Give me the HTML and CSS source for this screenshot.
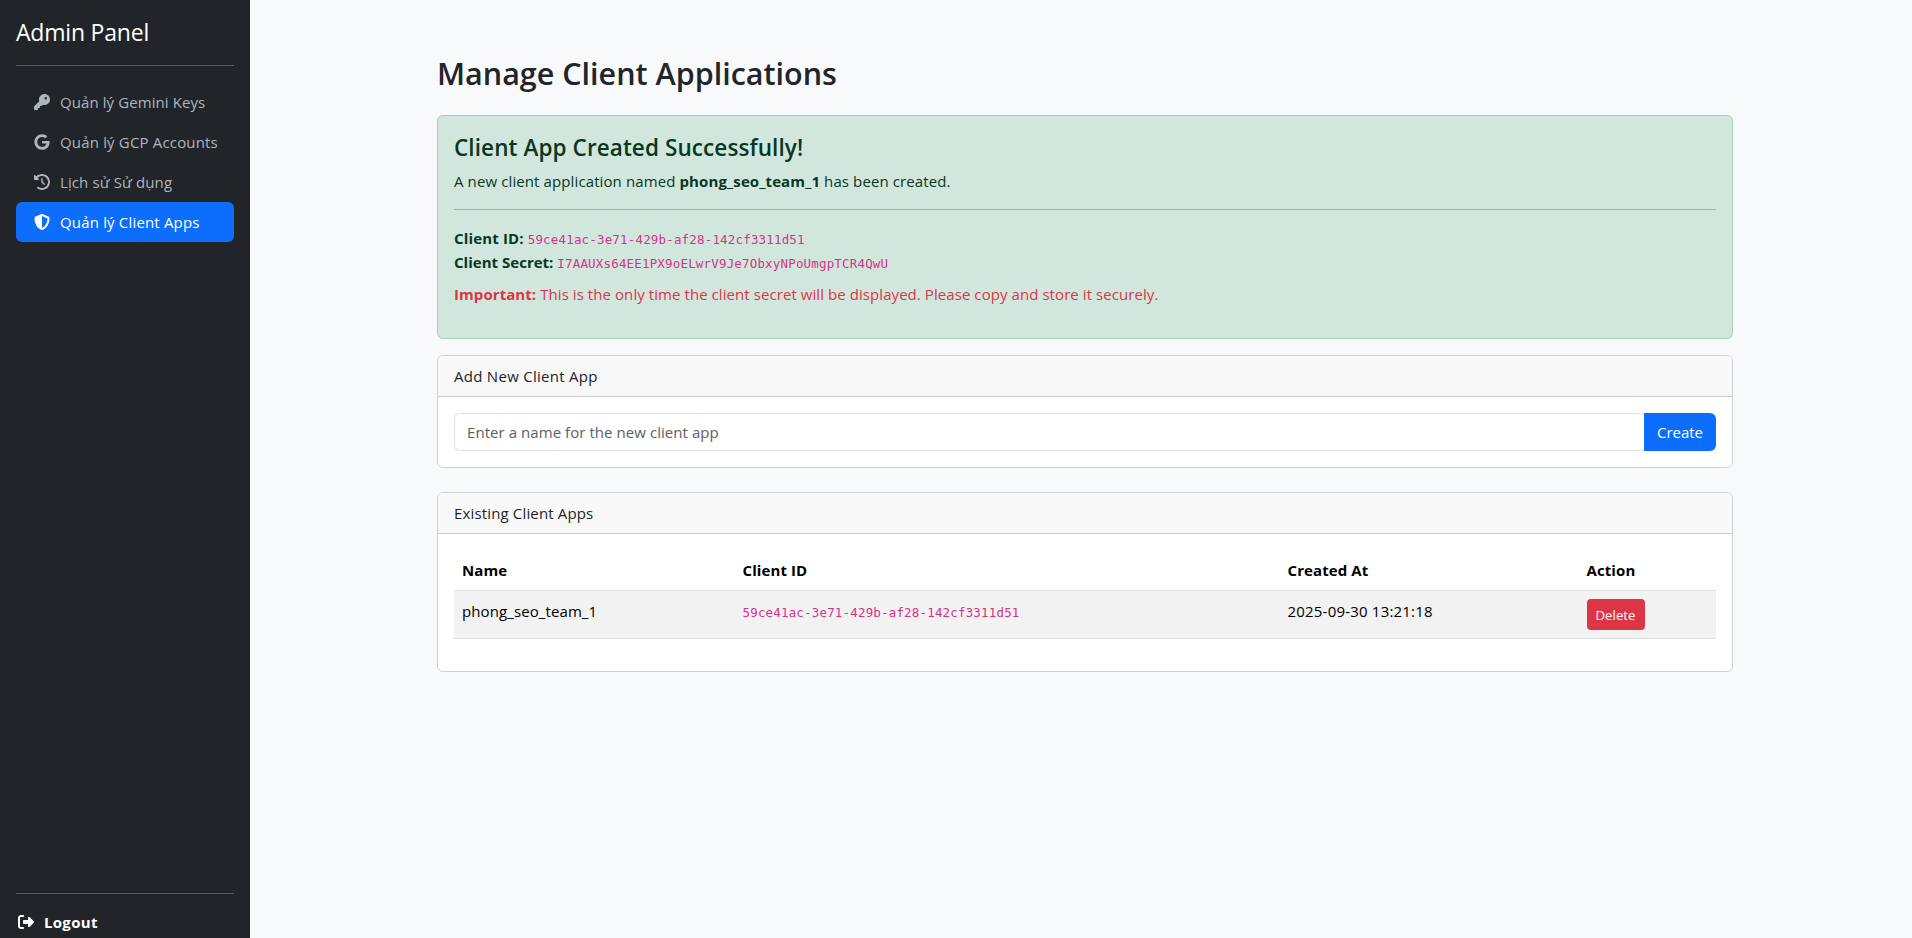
FILE: index.html
```
<!DOCTYPE html>
<html lang="vi">
<head>
<meta charset="utf-8">
<title>Manage Client Applications</title>
<link rel="stylesheet" href="styles.css">
</head>
<body>
<div class="layout">
  <aside class="sidebar">
    <div class="brand">Admin Panel</div>
    <hr class="side-rule">
    <nav class="nav">
      <a class="nav-link"><svg class="icon" viewBox="0 0 512 512"><path d="M336 352c97.200 0 176-78.800 176-176S433.200 0 336 0S160 78.800 160 176c0 18.700 2.900 36.800 8.300 53.700L7 391c-4.500 4.500-7 10.600-7 17v80c0 13.300 10.700 24 24 24h80c13.300 0 24-10.700 24-24V448h40c13.300 0 24-10.700 24-24V384h40c6.400 0 12.500-2.500 17-7l33.300-33.300c16.900 5.400 35 8.300 53.700 8.300zM376 96a40 40 0 1 1 0 80 40 40 0 1 1 0-80z"/></svg><span class="label-gemini">Quản lý Gemini Keys</span></a>
      <a class="nav-link"><svg class="icon" viewBox="-12 0 512 512"><path d="M488 261.800C488 403.300 391.100 504 248 504 110.800 504 0 393.200 0 256S110.800 8 248 8c66.800 0 123 24.500 166.300 64.900l-67.500 64.900C258.500 52.600 94.300 116.600 94.300 256c0 86.500 69.100 156.600 153.700 156.600 98.200 0 135-70.400 140.800-106.900H248v-85.300h236.100c2.300 12.700 3.900 24.900 3.900 41.400z"/></svg><span class="label-gcp">Quản lý GCP Accounts</span></a>
      <a class="nav-link"><svg class="icon" viewBox="0 0 512 512"><path d="M75 75L41 41C25.900 25.900 0 36.600 0 57.900V168c0 13.300 10.700 24 24 24H134.100c21.400 0 32.100-25.900 17-41l-30.800-30.800C155 85.500 203 64 256 64c106 0 192 86 192 192s-86 192-192 192c-40.800 0-78.600-12.700-109.700-34.400c-14.500-10.100-34.400-6.600-44.600 7.900s-6.600 34.400 7.900 44.600C151.200 495 201.700 512 256 512c141.400 0 256-114.600 256-256S397.400 0 256 0C185.300 0 121.300 28.700 75 75zm181 53c-13.300 0-24 10.700-24 24V256c0 6.400 2.500 12.500 7 17l72 72c9.400 9.400 24.600 9.400 33.900 0s9.400-24.600 0-33.900l-65-65V152c0-13.300-10.700-24-24-24z"/></svg><span class="label-history">Lịch sử Sử dụng</span></a>
      <a class="nav-link active"><svg class="icon" viewBox="0 0 512 512"><path d="M256 0c4.600 0 9.200 1 13.400 2.900L457.700 82.800c22 9.300 38.400 31 38.300 57.200c-.5 99.200-41.300 280.700-213.600 363.200c-16.700 8-36.100 8-52.800 0C57.300 420.700 16.500 239.200 16 140c-.1-26.200 16.300-47.900 38.300-57.200L242.700 2.900C246.800 1 251.400 0 256 0zm0 66.800V444.800C394 378 431.100 230.100 432 141.400L256 66.800z"/></svg><span class="label-gcp">Quản lý Client Apps</span></a>
    </nav>
    <hr class="side-rule">
    <a class="logout"><svg class="icon" viewBox="0 0 512 512"><path d="M377.900 105.900L500.700 228.700c7.200 7.200 11.300 17.100 11.300 27.300s-4.100 20.100-11.300 27.300L377.900 406.100c-6.400 6.400-15 9.900-24 9.900c-18.700 0-33.900-15.200-33.900-33.900l0-62.100-128 0c-17.700 0-32-14.300-32-32l0-64c0-17.700 14.300-32 32-32l128 0 0-62.100c0-18.700 15.200-33.900 33.900-33.900c9 0 17.600 3.600 24 9.900zM160 96L96 96c-17.700 0-32 14.300-32 32l0 256c0 17.700 14.300 32 32 32l64 0c17.700 0 32 14.300 32 32s-14.300 32-32 32l-64 0c-53 0-96-43-96-96L0 128C0 75 43 32 96 32l64 0c17.700 0 32 14.300 32 32s-14.300 32-32 32z"/></svg><strong>Logout</strong></a>
  </aside>
  <main class="main">
    <h1 class="page-title">Manage Client Applications</h1>
    <section class="alert">
      <h2 class="alert-heading">Client App Created Successfully!</h2>
      <p class="alert-line intro">A new client application named <strong>phong_seo_team_1</strong> has been created.</p>
      <hr class="alert-rule">
      <p class="alert-line"><strong class="id-label">Client ID:</strong> <code>59ce41ac-3e71-429b-af28-142cf3311d51</code></p>
      <p class="alert-line"><strong class="secret-label">Client Secret:</strong> <code>I7AAUXs64EE1PX9oELwrV9Je7ObxyNPoUmgpTCR4QwU</code></p>
      <p class="alert-line danger"><strong>Important:</strong> This is the only time the client secret will be displayed. Please copy and store it securely.</p>
    </section>
    <section class="card">
      <div class="card-header add">Add New Client App</div>
      <div class="card-body input-group">
        <div class="input">Enter a name for the new client app</div>
        <button class="btn btn-create">Create</button>
      </div>
    </section>
    <section class="card">
      <div class="card-header">Existing Client Apps</div>
      <div class="card-body">
        <table class="table">
          <colgroup><col class="c-name"><col class="c-id"><col class="c-date"><col></colgroup>
          <thead><tr><th>Name</th><th>Client ID</th><th>Created At</th><th>Action</th></tr></thead>
          <tbody><tr><td>phong_seo_team_1</td><td><code>59ce41ac-3e71-429b-af28-142cf3311d51</code></td><td class="date">2025-09-30 13:21:18</td><td><button class="btn btn-delete">Delete</button></td></tr></tbody>
        </table>
      </div>
    </section>
  </main>
</div>
</body>
</html>
```
FILE: styles.css
```
*, *::before, *::after { box-sizing: border-box; }
body { margin: 0; font-family: "Open Sans", "Noto Sans", sans-serif; font-size: 15px; line-height: 24px; color: #212529; background: #f8f9fa; }
h1, h2, p { margin: 0; }
strong, th { font-weight: 700; }
code { font-family: "DejaVu Sans Mono", monospace; font-size: 12.5px; line-height: 1; color: #d63384; letter-spacing: 0.17px; }
.layout { display: flex; height: 938px; overflow: hidden; }
.sidebar { width: 250px; flex: none; display: flex; flex-direction: column; padding: 16px 16px 0; background: #212529; color: #fff; }
.brand { height: 49px; font-size: 23px; line-height: 32px; letter-spacing: -0.2px; }
.side-rule { width: 100%; height: 1px; margin: 0; border: 0; background: #585b5f; flex: none; }
.nav { flex: 1; display: flex; flex-direction: column; padding-top: 16px; }
.nav-link { display: flex; align-items: center; gap: 10px; height: 40px; padding: 0 18px; border-radius: 6px; color: #adb5bd; white-space: nowrap; }
.nav-link.active { background: #0d6efd; color: #fff; }
.label-gemini { letter-spacing: 0.09px; }
.label-gcp { letter-spacing: 0.17px; }
.label-history { letter-spacing: 0.1px; }
.icon { width: 16px; height: 16px; flex: none; fill: currentColor; }
.logout { display: flex; align-items: center; gap: 10px; height: 44px; padding: 12px 2px 0; letter-spacing: 0.3px; }
.main { width: 1296px; margin-left: 187px; padding-top: 54px; }
.page-title { margin-bottom: 23px; font-size: 30.5px; font-weight: 600; line-height: 38px; }
.alert { height: 224px; margin-bottom: 16px; padding: 17px 16px 16px; border: 1px solid #a3cfbb; border-radius: 6px; background: #d1e7dd; color: #0a3622; }
.alert-heading { margin-bottom: 7px; font-size: 22.5px; font-weight: 600; line-height: 29px; letter-spacing: 0.09px; }
.alert-line { height: 24px; }
.alert-line.intro { letter-spacing: 0.11px; }
.id-label { letter-spacing: 0.16px; }
.secret-label { letter-spacing: 0.02px; }
.alert-rule { height: 1px; margin: 16px 0; border: 0; background: #a0b9ad; }
.danger { margin-top: 8px; color: #dc3545; letter-spacing: 0.07px; }
.card { margin-bottom: 24px; border: 1px solid #d0d1d2; border-radius: 6px; background: #fff; overflow: hidden; }
.card-header { height: 41px; padding: 8px 16px; border-bottom: 1px solid #cbcbcb; background: #f8f8f8; letter-spacing: 0.15px; }
.card-header.add { letter-spacing: 0.28px; }
.card-body { padding: 16px; }
.input-group { display: flex; }
.input { flex: 1; height: 38px; padding: 6px 12px; border: 1px solid #dee2e6; border-right: 0; border-radius: 6px 0 0 6px; color: #5b6066; letter-spacing: 0.06px; }
.btn { border: 0; padding: 0; color: #fff; font-family: inherit; }
.btn-create { width: 72px; height: 38px; border-radius: 0 6px 6px 0; background: #0d6efd; font-size: 15px; }
.btn-delete { display: block; width: 58px; height: 31px; border-radius: 4px; background: #dc3545; font-size: 13.2px; letter-spacing: 0.05px; }
.table { width: 100%; table-layout: fixed; border-collapse: collapse; margin-bottom: 16px; color: #000; }
.table th, .table td { padding: 8px; text-align: left; vertical-align: top; border-bottom: 1px solid #dee2e6; letter-spacing: 0.1px; }
.table td { background: #f2f2f2; }
.table td.date { letter-spacing: 0.2px; }
.c-name { width: 280.5px; }
.c-id { width: 545px; }
.c-date { width: 299px; }
```
